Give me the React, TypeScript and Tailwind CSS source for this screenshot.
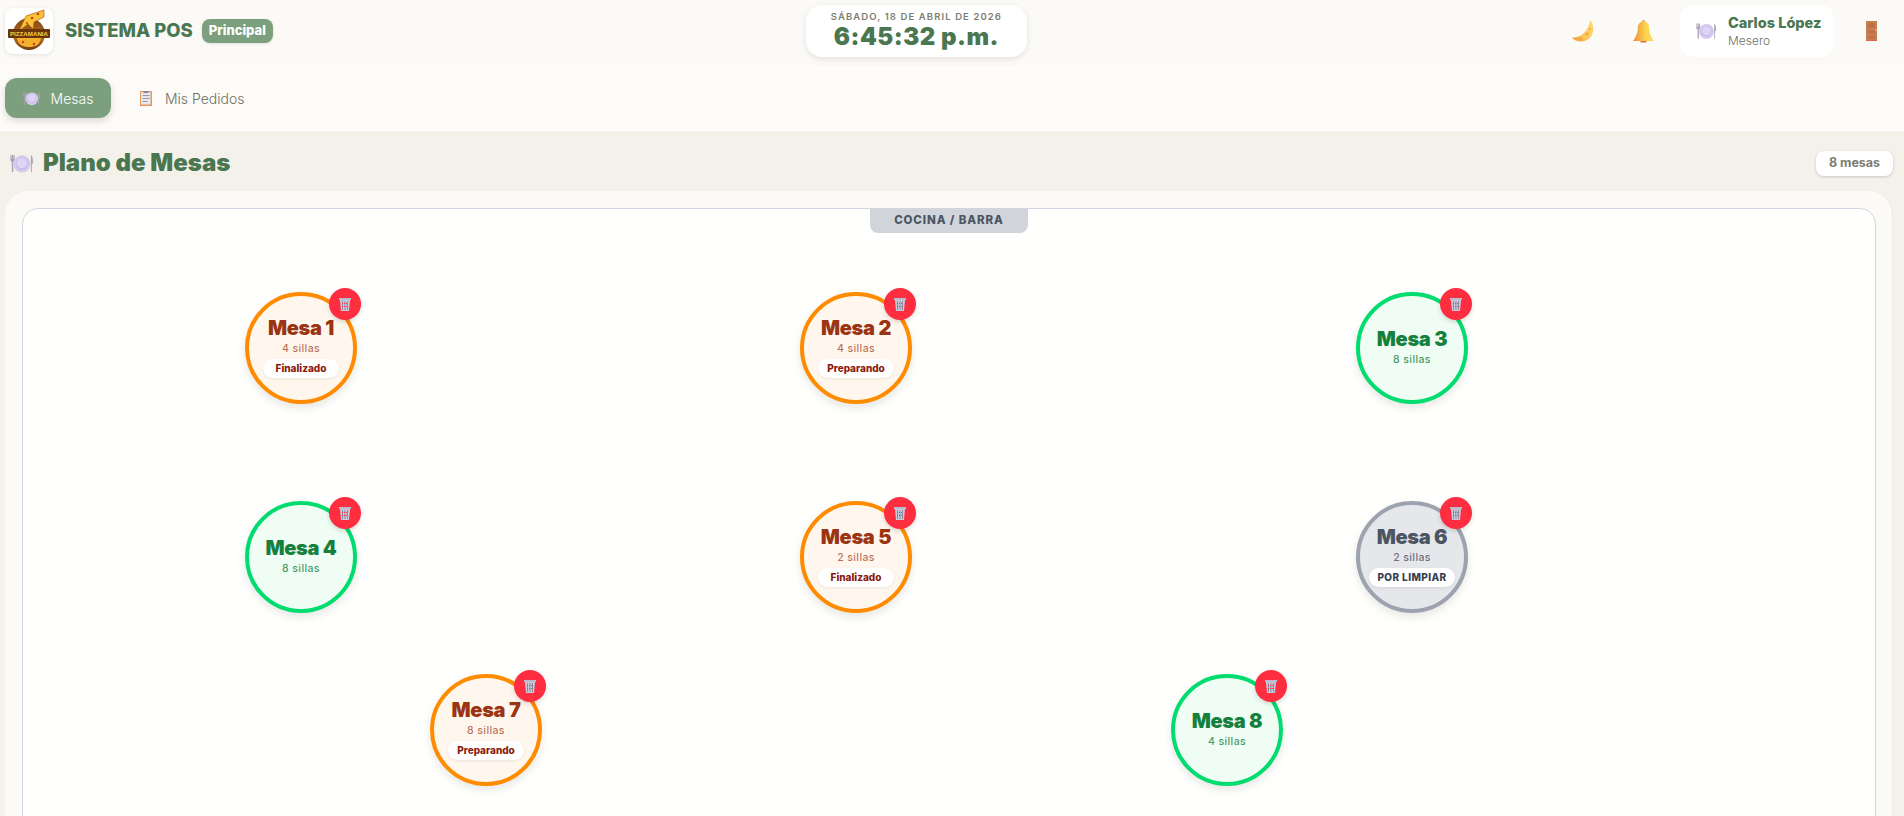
import React from 'react';

type Table = {
  name: string;
  seats: number;
  status?: string;
  kind: 'busy' | 'free' | 'dirty';
  x: number;
  y: number;
};

// x, y = centre of the table on the floor plan
const tables: Table[] = [
  { name: 'Mesa 1', seats: 4, status: 'Finalizado', kind: 'busy', x: 278, y: 139 },
  { name: 'Mesa 2', seats: 4, status: 'Preparando', kind: 'busy', x: 833, y: 139 },
  { name: 'Mesa 3', seats: 8, kind: 'free', x: 1389, y: 139 },
  { name: 'Mesa 4', seats: 8, kind: 'free', x: 278, y: 348 },
  { name: 'Mesa 5', seats: 2, status: 'Finalizado', kind: 'busy', x: 833, y: 348 },
  { name: 'Mesa 6', seats: 2, status: 'POR LIMPIAR', kind: 'dirty', x: 1389, y: 348 },
  { name: 'Mesa 7', seats: 8, status: 'Preparando', kind: 'busy', x: 463, y: 521 },
  { name: 'Mesa 8', seats: 4, kind: 'free', x: 1204, y: 521 },
];

const PlateIcon = ({ size }: { size: number }) => (
  <svg width={size} height={size} viewBox="0 0 24 24" className="shrink-0">
    <rect x="0.500" y="3" width="1.200" height="5" fill="#a9a3b5" />
    <rect x="2.100" y="3" width="1.200" height="5" fill="#a9a3b5" />
    <rect x="3.700" y="3" width="1.200" height="5" fill="#a9a3b5" />
    <rect x="0.500" y="7" width="4.400" height="3" rx="1" fill="#a9a3b5" />
    <rect x="1.900" y="9" width="1.600" height="12" rx="0.700" fill="#a9a3b5" />
    <path d="M21.800 3c1.600 1 2.200 4 2.200 9h-1.200v9h-1z" fill="#a9a3b5" />
    <circle cx="12.500" cy="12.500" r="9" fill="#d5c9f0" />
    <circle cx="12.500" cy="12.500" r="6" fill="#c4b6e6" />
    <circle cx="12.500" cy="11.800" r="5.300" fill="#ded4f5" />
  </svg>
);

const ClipboardIcon = () => (
  <svg width="12" height="15" viewBox="0 0 12 15" className="shrink-0">
    <rect width="12" height="15" fill="#e49a5f" />
    <rect x="1" y="1" width="9.500" height="12.500" fill="#e8e6ee" />
    <rect x="3.500" y="0" width="5" height="2" fill="#8a8296" />
    <rect x="2.500" y="4" width="7" height="1" fill="#9d97ab" />
    <rect x="2.500" y="7" width="7" height="1" fill="#9d97ab" />
    <rect x="2.500" y="10" width="5" height="1" fill="#9d97ab" />
  </svg>
);

const MoonIcon = () => (
  <svg width="22" height="22" viewBox="0 0 22 22" className="shrink-0">
    <defs>
      <linearGradient id="moon" x1="1" x2="0" y1="0" y2="1">
        <stop offset="0" stopColor="#fedc7a" />
        <stop offset="0.6" stopColor="#fbc65a" />
        <stop offset="1" stopColor="#f08f35" />
      </linearGradient>
    </defs>
    <path d="M18 0C24 6 22 21 9 21.500 5 21.500 2 20 0 17.500 7 18.500 16 13 18 0z" fill="url(#moon)" />
    <circle cx="15" cy="14" r="1.500" fill="#eda63f" />
    <circle cx="9" cy="19" r="1.200" fill="#eda63f" />
    <circle cx="18" cy="9" r="1" fill="#eda63f" />
  </svg>
);

const BellIcon = () => (
  <svg width="21" height="23" viewBox="0 0 21 23" className="shrink-0">
    <defs>
      <linearGradient id="bell" x1="0" x2="1" y1="0" y2="0">
        <stop offset="0" stopColor="#ec8b3a" />
        <stop offset="0.6" stopColor="#fdd34d" />
        <stop offset="1" stopColor="#fcd96a" />
      </linearGradient>
    </defs>
    <circle cx="10.500" cy="1.500" r="1.500" fill="#ee9c3f" />
    <path d="M10.500 1.500c4 0 5.600 3 5.700 7 .2 4 1.300 8 4.800 12.500H0c3.500-4.500 4.600-8.500 4.800-12.500.1-4 1.700-7 5.700-7z" fill="url(#bell)" />
    <rect x="7.500" y="21" width="6" height="1.500" fill="#e2703f" />
  </svg>
);

const DoorIcon = () => (
  <svg width="11" height="20" viewBox="0 0 11 20" className="shrink-0">
    <rect width="11" height="20" fill="#c57b50" />
    <rect x="1.500" y="1.500" width="8" height="6" fill="#bd7146" stroke="#d18d5e" strokeWidth="0.500" />
    <rect x="1.500" y="9" width="8" height="4" fill="#bd7146" stroke="#d18d5e" strokeWidth="0.500" />
    <rect x="1.500" y="14" width="8" height="4.500" fill="#bd7146" stroke="#d18d5e" strokeWidth="0.500" />
    <rect x="9" y="8.500" width="2" height="1.500" fill="#f5a742" />
    <rect y="19" width="11" height="1" fill="#d9655a" />
  </svg>
);

const TrashIcon = () => (
  <svg width="12" height="13" viewBox="0 0 12 13" className="shrink-0">
    <rect x="0" y="0" width="12" height="2" fill="#b9bacb" />
    <path d="M1 2h10l-1 11H2z" fill="#c9cad8" />
    <path d="M3.500 3v9M6 3v9M8.500 3v9" stroke="#8f8da3" strokeWidth="1" />
    <path d="M3 5.500h6M3 8.500h6" stroke="#ff3b52" strokeWidth="1" strokeDasharray="1 1" />
  </svg>
);

const Logo = () => (
  <svg width="44" height="44" viewBox="0 0 44 44">
    <defs>
      <linearGradient id="logoBody" x1="0" x2="0" y1="0" y2="1">
        <stop offset="0" stopColor="#7d4518" />
        <stop offset="0.6" stopColor="#b96d1e" />
        <stop offset="1" stopColor="#6e3c15" />
      </linearGradient>
    </defs>
    <circle cx="22" cy="25" r="16" fill="url(#logoBody)" />
    <path d="M10 29h24c-1 7-6 9-12 9s-11-2-12-9z" fill="#f3b02a" />
    <path d="M12 22 L19 7 L37 1 L37 8 L27 13 L26 20 L21 15z" fill="#f9c333" stroke="#b5601c" strokeWidth="0.700" />
    <circle cx="31" cy="5" r="1.300" fill="#d23a22" />
    <circle cx="25" cy="9" r="1.300" fill="#d23a22" />
    <circle cx="20" cy="14" r="1.100" fill="#d23a22" />
    <rect x="1" y="20" width="42" height="9" rx="1" fill="#6b350c" />
    <text x="22" y="26.800" textAnchor="middle" fontSize="5.400" fontWeight="800" fill="#fbcd3c" fontFamily="'Liberation Sans', sans-serif" textLength="38" lengthAdjust="spacingAndGlyphs">
      PIZZAMANIA
    </text>
    <circle cx="16" cy="33" r="1.200" fill="#d23a22" />
    <circle cx="27" cy="35" r="1.200" fill="#d23a22" />
  </svg>
);

const tableStyles = {
  busy: {
    circle: 'border-[#ff8c00] bg-[#fff7ed]',
    name: 'text-[#9a3412]',
    seats: 'text-[#9a3412]/70',
    status: 'text-[#8b1a0e] text-[10px] w-[76px]',
  },
  free: {
    circle: 'border-[#00dc6e] bg-[#f0fdf4]',
    name: 'text-[#15803d]',
    seats: 'text-[#15803d]/80',
    status: '',
  },
  dirty: {
    circle: 'border-[#9ca3af] bg-[#e5e7eb]',
    name: 'text-[#4b5563]',
    seats: 'text-[#6b7280]',
    status: 'text-[#374151] text-[10px] tracking-[0.4px] w-[86px]',
  },
};

const TableNode = ({ table }: { table: Table }) => {
  const s = tableStyles[table.kind];
  return (
    <div
      className={`absolute w-[112px] h-[112px] -translate-x-1/2 -translate-y-1/2 rounded-full border-[4px] ${s.circle} shadow-[0_4px_10px_rgba(0,0,0,0.1)] flex flex-col items-center justify-center pb-[3px]`}
      style={{ left: table.x, top: table.y }}
    >
      <div className={`text-[20px] leading-[24px] font-black tracking-[-0.3px] ${s.name}`}>{table.name}</div>
      <div className={`text-[10.5px] leading-[14px] mt-[2px] font-medium tracking-[0.4px] ${s.seats}`}>{table.seats} sillas</div>
      {table.status && (
        <div className={`mt-[3px] h-[19px] rounded-full bg-white flex items-center justify-center font-extrabold shadow-[0_1px_3px_rgba(0,0,0,0.08)] ${s.status}`}>
          {table.status}
        </div>
      )}
      <div className="absolute -top-[8px] -right-[8px] w-[32px] h-[32px] rounded-full bg-[#ff2d40] flex items-center justify-center shadow-[0_2px_5px_rgba(0,0,0,0.15)]">
        <TrashIcon />
      </div>
    </div>
  );
};

export default function App() {
  return (
    <div className="h-screen overflow-hidden bg-[#f4f1ea] text-[#4a7650] flex flex-col font-['Inter',sans-serif]">
      <header className="h-[69px] shrink-0 bg-[#fbfaf6] border-b border-white flex items-center justify-between pl-[5px] pr-[27px] pb-[6px]">
        <div className="flex items-center">
          <div className="w-[48px] h-[46px] rounded-[8px] bg-white shadow-[0_1px_4px_rgba(0,0,0,0.1)] flex items-center justify-center">
            <Logo />
          </div>
          <span className="ml-[12px] text-[18.5px] font-extrabold">SISTEMA POS</span>
          <span className="ml-[9px] w-[71px] h-[24px] rounded-[8px] bg-[#7c9f7e] text-white text-[13px] font-extrabold flex items-center justify-center shadow-[0_1px_3px_rgba(0,0,0,0.1)]">Principal</span>
        </div>
        <div className="mr-[12px] w-[221px] h-[52px] rounded-[16px] bg-white shadow-[0_2px_6px_rgba(0,0,0,0.1)] flex flex-col items-center justify-center">
          <div className="text-[9.5px] leading-[12px] font-semibold tracking-[1.1px] text-[#7d7d72]">SÁBADO, 18 DE ABRIL DE 2026</div>
          <div className="text-[24px] leading-[28px] font-black tracking-[0.5px] text-[#4a7650]">6:45:32 p.m.</div>
        </div>
        <div className="flex items-center">
          <MoonIcon />
          <span className="ml-[39px] flex"><BellIcon /></span>
          <div className="ml-[26px] w-[154px] h-[52px] rounded-[14px] bg-white flex items-center pl-[16px]">
            <PlateIcon size={20} />
            <div className="ml-[12px]">
              <div className="text-[14.5px] leading-[18px] font-extrabold">Carlos López</div>
              <div className="text-[12px] leading-[16px] mt-[1px] font-light text-[#6f6f64]">Mesero</div>
            </div>
          </div>
          <span className="ml-[32px] flex"><DoorIcon /></span>
        </div>
      </header>

      <nav className="h-[62px] shrink-0 bg-[#fcfbf7] border-b border-white flex items-start gap-[29px] pl-[5px] pt-[9px]">
        <button className="w-[106px] h-[40px] rounded-[12px] bg-[#7c9f7e] text-white text-[14px] font-light flex items-center justify-center gap-[11px] shadow-[0_3px_7px_rgba(0,0,0,0.14)]">
          <PlateIcon size={17} />
          Mesas
        </button>
        <button className="h-[40px] text-[#6f6f64] text-[14px] font-light flex items-center gap-[13px]">
          <ClipboardIcon />
          Mis Pedidos
        </button>
      </nav>

      <main className="flex-1 min-h-0 pl-[5px] pr-[11px] flex flex-col">
        <div className="h-[60px] shrink-0 flex items-center justify-between pl-[5px] pt-[4px]">
          <h1 className="flex items-center gap-[10px] text-[24px] font-black">
            <PlateIcon size={23} />
            Plano de Mesas
          </h1>
          <span className="w-[77px] h-[25px] rounded-[8px] bg-white text-[#7d7d72] text-[12.5px] font-bold flex items-center justify-center shadow-[0_1px_3px_rgba(0,0,0,0.18)]">8 mesas</span>
        </div>
        <section className="flex-1 rounded-t-[24px] bg-[#fbfaf6] border-r border-[#eceae4] pl-[17px] pr-[16px] pt-[17px]">
          <div className="relative h-[800px] rounded-t-[16px] bg-[#fffffd] border-[1.5px] border-[#d3d6e2]">
            <div className="absolute left-1/2 -top-[1px] -translate-x-1/2 w-[158px] h-[25px] rounded-b-[8px] bg-[#d1d5db] text-[#4b5563] text-[11.5px] font-extrabold tracking-[0.9px] flex items-center justify-center">
              COCINA / BARRA
            </div>
            {tables.map((t) => (
              <TableNode key={t.name} table={t} />
            ))}
          </div>
        </section>
      </main>
    </div>
  );
}
